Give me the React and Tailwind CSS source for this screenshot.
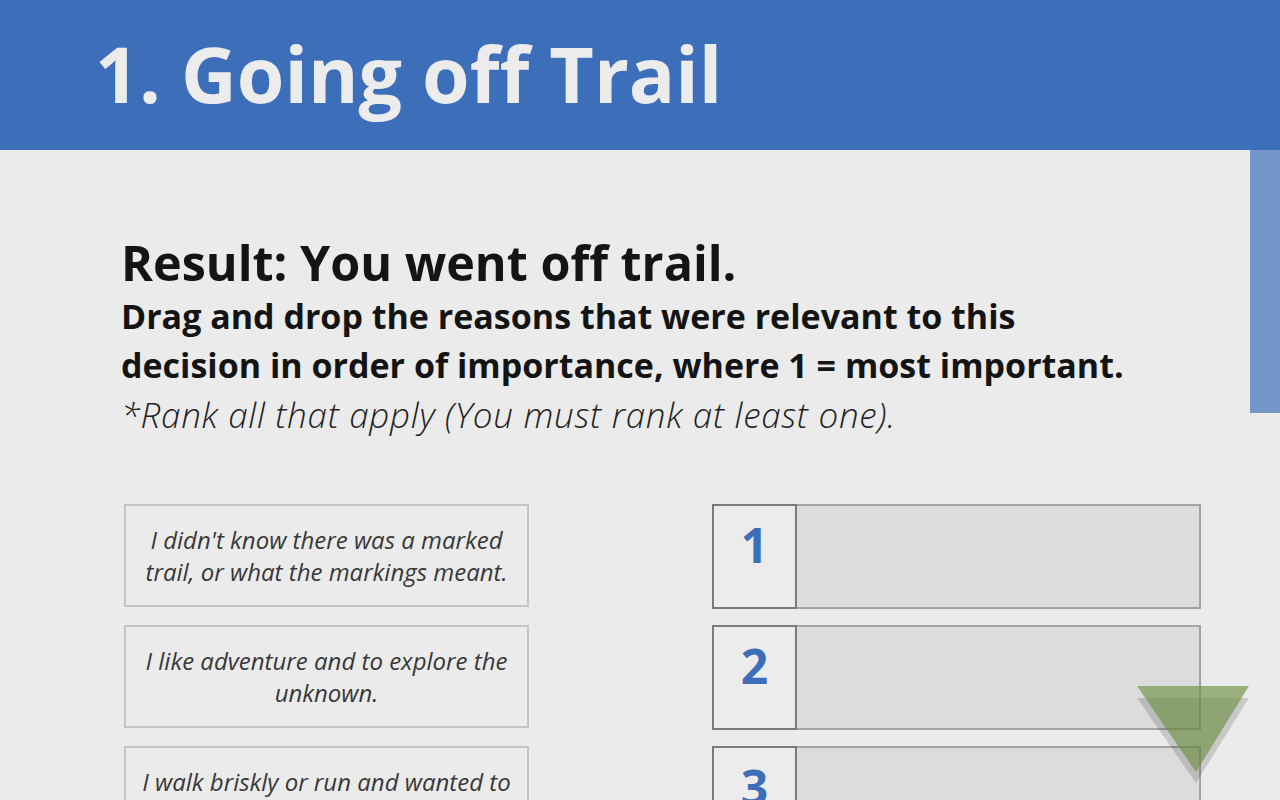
import React from 'react';

const reasons = [
  "I didn't know there was a marked trail, or what the markings meant.",
  'I like adventure and to explore the unknown.',
  'I walk briskly or run and wanted to keep my pace.',
];

const font = { fontFamily: '"Open Sans", "Noto Sans", sans-serif' };

const App = () => {
  return (
    <div className="relative h-[800px] w-[1280px] overflow-hidden bg-[#ebebeb]" style={font}>
      {/* Title bar */}
      <header className="h-[150px] bg-[#3d6eb9] pl-[95px] pt-[24px]">
        <h1 className="text-[77px] font-bold leading-[100px] text-[#ececec]">1. Going off Trail</h1>
      </header>

      {/* scroll thumb */}
      <div className="absolute right-0 top-[150px] h-[263px] w-[30px] bg-[#7395c8]" />

      <main className="pl-[121px] pt-[82px]">
        <h2 className="text-[48.5px] font-bold leading-[60px] text-[#141414]">Result: You went off trail.</h2>
        <p className="text-[34px] font-bold leading-[49px] text-[#141414]">
          Drag and drop the reasons that were relevant to this
          <br />
          decision in order of importance, where 1 = most important.
        </p>
        <p className="text-[35px] font-light italic leading-[49px] tracking-[0.7px] text-[#222]">*Rank all that apply (You must rank at least one).</p>

        <div className="mt-[65px] flex pl-[3px]">
          <div className="flex w-[405px] flex-col gap-[18px]">
            {reasons.map((r) => (
              <div key={r} className="flex h-[103px] items-center justify-center border-2 border-[#c4c4c4] px-4 text-center text-[24px] italic leading-[32px] text-[#383838]">
                {r}
              </div>
            ))}
          </div>

          <div className="ml-[183px] flex w-[489px] flex-col gap-[16px]">
            {[1, 2, 3].map((n) => (
              <div key={n} className="flex h-[105px]">
                <div className="flex w-[85px] shrink-0 justify-center border-2 border-[#7a7a7a] bg-[#ececec] pt-[4px] text-[48px] font-bold leading-[70px] text-[#3d6eb9]">
                  {n}
                </div>
                <div className="flex-1 border-2 border-l-0 border-[#a3a3a3] bg-[#dcdcdc]" />
              </div>
            ))}
          </div>
        </div>
      </main>

      {/* next arrow */}
      <svg className="absolute left-[1136px] top-[686px]" width="114" height="100" viewBox="0 0 114 100">
        <polygon points="1,12 113,12 60,97" fill="rgba(0,0,0,0.15)" />
        <polygon points="1,0 113,0 60,86" fill="rgba(112,144,69,0.65)" />
      </svg>
    </div>
  );
};

export default App;
